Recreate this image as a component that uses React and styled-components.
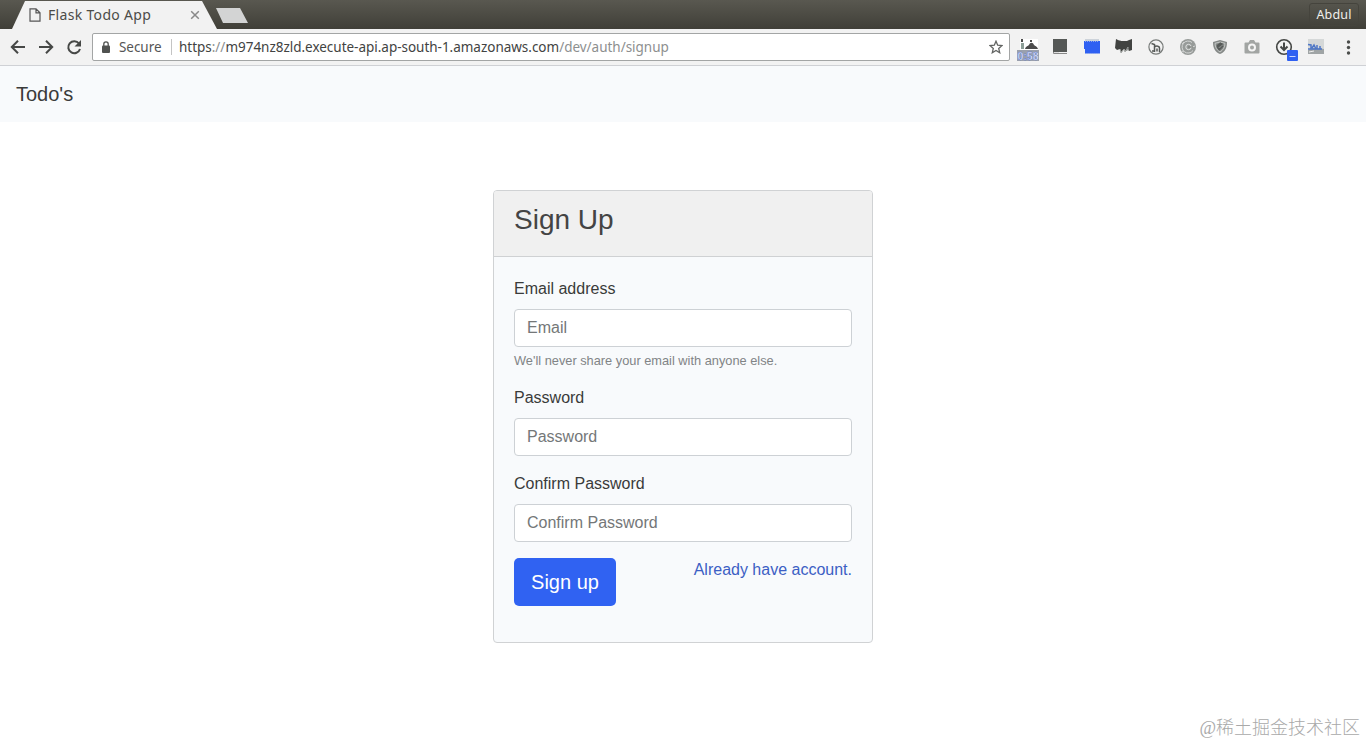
import React from 'react';
import styled, { createGlobalStyle } from 'styled-components';

const GlobalStyle = createGlobalStyle`
  * {
    box-sizing: border-box;
  }
  body {
    margin: 0;
    background-color: white;
    color: #3a3b3a;
    font-family: "Liberation Sans", Arial, sans-serif;
    font-size: 16px;
    line-height: 1.5;
    overflow: hidden;
  }
`;

const Page = styled.div`
  display: flex;
  flex-direction: column;
  height: 744px;
`;

const TitleBar = styled.div`
  display: flex;
  justify-content: space-between;
  height: 29px;
  background: linear-gradient(#595850, #403f38);
  font-family: "Noto Sans", sans-serif;
`;

const TabStrip = styled.div`
  display: flex;
`;

const Tab = styled.div`
  display: flex;
  align-items: center;
  width: 206px;
  height: 28px;
  margin: 1px 0 0 12px;
  padding: 0 17px 0 17px;
  background-color: #f2f2f2;
  clip-path: polygon(13px 0, 190px 0, 205px 100%, 0 100%);
`;

const TabTitle = styled.span`
  width: 142px;
  flex: none;
  margin-left: 7px;
  font-size: 14px;
  line-height: 20px;
  letter-spacing: ${({ spacing }) => spacing};
  white-space: nowrap;
  color: #4b4c48;
`;

const NewTab = styled.div`
  width: 32px;
  height: 15px;
  margin-top: 8px;
  margin-left: -2px;
  background-color: #d3d4d4;
  clip-path: polygon(0 0, 24px 0, 32px 100%, 7px 100%);
`;

const UserButton = styled.div`
  width: 50px;
  height: 23px;
  margin: 3px 7px 0 0;
  border: 1px solid #45443d;
  border-radius: 3px;
  font-size: 12.5px;
  line-height: 22px;
  letter-spacing: 0.15px;
  text-align: center;
  color: #f0efec;
`;

const Toolbar = styled.div`
  display: flex;
  align-items: flex-start;
  height: 37px;
  background-color: #f2f2f2;
  border-bottom: 1px solid #cfd1d5;
`;

const NavButtons = styled.div`
  display: flex;
  gap: 12px;
  width: 92px;
  padding: 10px 0 0 10px;
`;

const AddressBar = styled.div`
  display: flex;
  align-items: center;
  width: 918px;
  height: 28px;
  margin-top: 4px;
  padding: 0 6px 0 8px;
  background-color: white;
  border: 1px solid #a3a5a5;
  border-radius: 2px;
  font-family: "Noto Sans", sans-serif;
  font-size: 13.5px;
  white-space: nowrap;
`;

const Secure = styled.span`
  width: 53px;
  margin-left: 8px;
  line-height: 16px;
  letter-spacing: -0.05px;
  color: #555;
  border-right: 1px solid #c4c4c4;
`;

const Url = styled.span`
  flex: 1;
  margin-left: 7px;
  letter-spacing: ${({ spacing }) => spacing};
  color: #424342;
`;

const Faded = styled.span`
  color: #8d8f8f;
`;

const Extensions = styled.div`
  display: flex;
  margin: 6px 0 0 2px;
`;

const ExtensionIcon = styled.svg`
  width: 32px;
  height: 28px;
  flex: none;
`;

const Navbar = styled.nav`
  display: flex;
  align-items: center;
  height: 56px;
  padding: 0 16px;
  background-color: #f8fafc;
  font-size: 20px;
`;

const Main = styled.main`
  display: flex;
  flex: 1;
  justify-content: center;
  align-items: flex-start;
  padding-top: 68px;
`;

const Card = styled.form`
  width: 380px;
  height: 453px;
  background-color: #f8fafc;
  border: 1px solid #d0d2d4;
  border-radius: 4px;
  overflow: hidden;
`;

const CardHeader = styled.div`
  height: 66px;
  padding: 12px 20px;
  background-color: #f0f0f0;
  border-bottom: 1px solid #cfd1d3;
`;

const CardTitle = styled.h3`
  margin: 0;
  font-size: 28px;
  font-weight: 400;
  line-height: 34px;
  color: #444;
`;

const CardBody = styled.div`
  padding: 20px;
`;

const FormGroup = styled.div`
  display: flex;
  flex-direction: column;
  margin-bottom: 16px;
`;

const Label = styled.label`
  margin-bottom: 8px;
  line-height: 24px;
`;

const Input = styled.input`
  width: 100%;
  height: 38px;
  padding: 6px 12px;
  background-color: white;
  border: 1px solid #cdd1d5;
  border-radius: 4px;
  font: inherit;
  &::placeholder {
    color: #747778;
    opacity: 1;
  }
`;

const HelpText = styled.small`
  margin-top: 4px;
  font-size: 12.8px;
  line-height: 19px;
  color: #818486;
`;

const Actions = styled.div`
  display: flex;
  justify-content: space-between;
  align-items: flex-start;
`;

const SubmitButton = styled.button`
  width: 102px;
  height: 48px;
  padding: 0;
  background-color: #3062f2;
  border: 0;
  border-radius: 5px;
  font: inherit;
  font-size: 20px;
  color: white;
  cursor: pointer;
`;

const LoginLink = styled.a`
  line-height: 24px;
  color: #3c5fc4;
  text-decoration: none;
`;

const Watermark = styled.div`
  position: absolute;
  right: 6px;
  bottom: 4px;
  font-family: "Liberation Serif", "Noto Sans CJK SC", sans-serif;
  font-size: 18px;
  font-weight: 300;
  line-height: 24px;
  color: #a9a9a9;
`;

const fields = [
  { label: 'Email address', placeholder: 'Email', type: 'email', help: "We'll never share your email with anyone else." },
  { label: 'Password', placeholder: 'Password', type: 'password' },
  { label: 'Confirm Password', placeholder: 'Confirm Password', type: 'password' },
];

const BrowserTabs = () => (
  <TitleBar>
    <TabStrip>
      <Tab>
        <svg width="12" height="14" viewBox="0 0 12 14" fill="none" stroke="#555" strokeWidth="1.2">
          <path d="M1 .8h6l4 4v8.4H1zM7 .8v4h4" />
        </svg>
        <TabTitle spacing="0.32px">Flask Todo App</TabTitle>
        <svg width="10" height="10" viewBox="0 0 10 10" fill="none" stroke="#898989" strokeWidth="1.5">
          <path d="M1.2 1.2l7.6 7.6M8.8 1.2L1.2 8.8" />
        </svg>
      </Tab>
      <NewTab />
    </TabStrip>
    <UserButton>Abdul</UserButton>
  </TitleBar>
);

const ExtensionIcons = () => (
  <Extensions>
    <ExtensionIcon viewBox="0 0 32 28">
      <path fill="#fff" d="M8 4h18v11H8z" />
      <path fill="#4b4b4b" d="M9 4h2v3H9zM13 14c1-3 3-3 4-4 1-3 4-3 5 0 1 1 3 1 4 4zM18 5h2v2h-2z" />
      <path fill="#8d9f98" d="M9 8h3v6H9z" />
      <path fill="#9aa0ad" d="M5 15h22v11H5z" />
      <text x="16" y="24.5" textAnchor="middle" fontFamily="Liberation Sans" fontSize="10.5" fontWeight="700" fill="#e7ebf6" stroke="#466bd4" strokeWidth=".35">0:58</text>
    </ExtensionIcon>
    <ExtensionIcon viewBox="0 0 32 28">
      <path fill="#555856" d="M9 4h14v13H9z" />
      <path stroke="#888" d="M9.500 17v1.500H23" fill="none" />
      <path stroke="#ddd" d="M10 17.500h5" />
    </ExtensionIcon>
    <ExtensionIcon viewBox="0 0 32 28">
      <path fill="#cdd3da" d="M9 4h14v3H9z" />
      <path fill="#2f60f2" d="M8 6h16v12.500H9V14H8z" />
      <path stroke="#8da6ec" strokeDasharray="1 1" d="M9 6.500h14M9 18.500h14" />
    </ExtensionIcon>
    <ExtensionIcon viewBox="0 0 32 28">
      <path fill="#414341" d="M8 4c3 2 4 1 5 2h6c1-1 3-1 5-2v11l-3 1-1-2-2 2-2-2-3 3-1-3-3 1-2-2z" />
      <path fill="none" stroke="#9b9e9c" strokeWidth=".9" d="M12 14l1 4 3-4 1 3 3-5v4" />
    </ExtensionIcon>
    <ExtensionIcon viewBox="0 0 32 28" fill="none" stroke="#777b79" strokeWidth="1.2">
      <circle cx="16" cy="12" r="7.1" />
      <path stroke="#555957" strokeWidth="1.500" d="M11.500 8.500l3 1v7.500M14.500 12c2-1.500 5-1 5 1v4M12 16h2.500M17 16.500v-3" />
    </ExtensionIcon>
    <ExtensionIcon viewBox="0 0 32 28" fill="none">
      <circle cx="16" cy="12" r="8" fill="#979b99" />
      <path stroke="#d4d6d5" d="M20 7.500a6 6 0 1 0 1 8M23 11l-4 1.500M10 9l2-2M10 16l2 1" />
      <circle cx="16.500" cy="12" r="2.700" stroke="#e0e2e1" strokeWidth="1" />
      <path stroke="#727673" d="M16 12h5" />
    </ExtensionIcon>
    <ExtensionIcon viewBox="0 0 32 28" fill="none">
      <path fill="#858987" d="M16 5l7 2c0 6-2 10-7 12-5-2-7-6-7-12z" />
      <path stroke="#d6d8d7" strokeWidth=".8" d="M16 7l5 1.300c0 4-2 7-5 8.700-3-1.700-5-4.700-5-8.700z" />
      <path stroke="#565a58" strokeWidth="1.600" d="M18.500 8.500l-5 3.500 2 3M19 11l-4 4M17 8l-4 3" />
    </ExtensionIcon>
    <ExtensionIcon viewBox="0 0 32 28">
      <path fill="#a2a5a3" d="M9.500 7.500h3l1.500-2.500h4l1.500 2.500h3q1 0 1 1v9q0 1-1 1h-13q-1 0-1-1v-9q0-1 1-1z" />
      <circle cx="16" cy="12.500" r="3" fill="#a2a5a3" stroke="#f5f5f5" strokeWidth="2" />
    </ExtensionIcon>
    <ExtensionIcon viewBox="0 0 32 28" fill="none">
      <circle cx="16" cy="12" r="7.300" stroke="#454745" strokeWidth="1.600" />
      <path stroke="#454745" strokeWidth="2" d="M16 7.500v7.500M12.500 11.500l3.500 3.500 3.500-3.500" />
      <rect x="19" y="15" width="11" height="11" rx="1" fill="#2f60f2" />
      <path stroke="#c9d5fb" d="M21.500 21.500h6" />
    </ExtensionIcon>
    <ExtensionIcon viewBox="0 0 32 28" fill="none">
      <path fill="#d5d8d8" d="M8 4h16v15H8z" />
      <path fill="#9fa4a5" d="M8 15l6-2 10 1v5H8z" />
      <path stroke="#4e76c6" strokeWidth="1.500" d="M8 9.500l3 .5v4M12 13l2-3 2 4M17 10v4M20 11v3M8 14h14" />
      <path stroke="#eee" d="M9 17l5-1" />
    </ExtensionIcon>
    <ExtensionIcon viewBox="0 0 32 28" fill="#4b4d4b">
      <circle cx="16.500" cy="7" r="1.700" />
      <circle cx="16.500" cy="12.500" r="1.700" />
      <circle cx="16.500" cy="18" r="1.700" />
    </ExtensionIcon>
  </Extensions>
);

const BrowserToolbar = () => (
  <Toolbar>
    <NavButtons>
      <svg width="16" height="16" viewBox="0 0 16 16" fill="none" stroke="#464846" strokeWidth="2">
        <path d="M15 8H2M8 1.800L1.800 8 8 14.200" />
      </svg>
      <svg width="16" height="16" viewBox="0 0 16 16" fill="none" stroke="#464846" strokeWidth="2">
        <path d="M1 8h13M8 1.800L14.200 8 8 14.200" />
      </svg>
      <svg width="16" height="16" viewBox="0 0 16 16" fill="none" stroke="#464846" strokeWidth="2">
        <path d="M13 4.500A6 6 0 1 0 14 10" />
        <path fill="#464846" stroke="none" d="M15 1v6.500H8.500z" />
      </svg>
    </NavButtons>
    <AddressBar>
      <svg width="10" height="12" viewBox="0 0 10 12" fill="#505250">
        <path d="M2 4.500h6q1 0 1 1V11q0 1-1 1H2q-1 0-1-1V5.500q0-1 1-1z" />
        <path fill="none" stroke="#505250" strokeWidth="1.300" d="M2.800 5V3a2.200 2.200 0 0 1 4.400 0V5" />
      </svg>
      <Secure>Secure</Secure>
      <Url spacing="-0.02px">
        https<Faded>://</Faded>m974nz8zld.execute-api.ap-south-1.amazonaws.com<Faded>/dev/auth/signup</Faded>
      </Url>
      <svg width="14" height="14" viewBox="0 0 14 14" fill="none" stroke="#626462" strokeWidth="1.300">
        <path d="M7 1.200l1.700 4 4.300.4-3.300 2.900 1 4.200L7 10.400l-3.700 2.300 1-4.200L1 5.600l4.300-.4z" />
      </svg>
    </AddressBar>
    <ExtensionIcons />
  </Toolbar>
);

const SignUpForm = () => (
  <Card>
    <CardHeader>
      <CardTitle>Sign Up</CardTitle>
    </CardHeader>
    <CardBody>
      {fields.map(({ label, placeholder, type, help }) => (
        <FormGroup key={label}>
          <Label>{label}</Label>
          <Input type={type} placeholder={placeholder} />
          {help && <HelpText>{help}</HelpText>}
        </FormGroup>
      ))}
      <Actions>
        <SubmitButton type="button">Sign up</SubmitButton>
        <LoginLink href="#">Already have account.</LoginLink>
      </Actions>
    </CardBody>
  </Card>
);

const App = () => (
  <Page>
    <GlobalStyle />
    <BrowserTabs />
    <BrowserToolbar />
    <Navbar>Todo's</Navbar>
    <Main>
      <SignUpForm />
    </Main>
    <Watermark>@稀土掘金技术社区</Watermark>
  </Page>
);

export default App;
